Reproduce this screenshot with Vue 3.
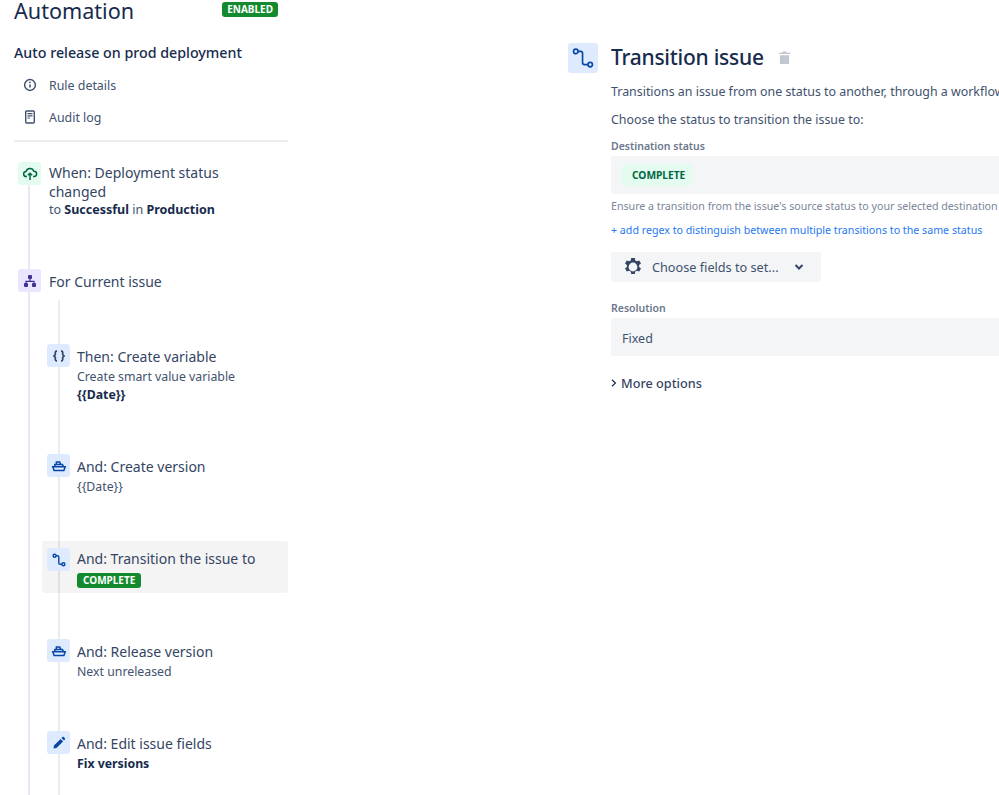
<template>
  <div class="page">
    <aside class="sidebar">
      <div class="head">
        <h1>Automation</h1>
        <span class="lozenge solid">ENABLED</span>
      </div>
      <h2 class="rule-name">Auto release on prod deployment</h2>
      <ul class="links">
        <li>
          <svg width="16" height="16" viewBox="0 0 16 16" fill="none" stroke="#42526e">
            <circle cx="8" cy="8" r="5.4" stroke-width="1.5" />
            <path d="M8 7.4v3.2" stroke-width="1.6" />
            <circle cx="8" cy="5.3" r=".9" fill="#42526e" stroke="none" />
          </svg>
          <span>Rule details</span>
        </li>
        <li>
          <svg width="16" height="16" viewBox="0 0 16 16" fill="none" stroke="#42526e">
            <rect x="3.7" y="2" width="8.6" height="12" rx="1" stroke-width="1.4" />
            <path d="M5.5 4.6h5M5.5 6.8h5M5.5 9h2.5" stroke-width="1.2" />
          </svg>
          <span>Audit log</span>
        </li>
      </ul>

      <div class="tree">
        <div class="step when">
          <span class="ico green">
            <svg width="16" height="16" viewBox="0 0 16 16" fill="none" stroke="#006644" stroke-width="1.5">
              <path d="M5 10.6H4.4a2.6 2.6 0 0 1-.3-5.2 4 4 0 0 1 7.7-.2 2.7 2.7 0 0 1 .2 5.4H11" />
              <path d="M8 14V7.4M5.8 9.3 8 7.2l2.2 2.1" />
            </svg>
          </span>
          <div class="body">
            <div class="title">When: Deployment status changed</div>
            <div class="sub big">to <b>Successful</b> in <b>Production</b></div>
          </div>
        </div>

        <div class="step for">
          <span class="ico purple">
            <svg width="16" height="16" viewBox="0 0 16 16" fill="none">
              <g fill="#403294">
                <rect x="6" y="2" width="4" height="4" rx="1" />
                <rect x="2" y="10" width="4" height="4" rx="1" />
                <rect x="10" y="10" width="4" height="4" rx="1" />
              </g>
              <path d="M8 5.800v2.600M4 10.500V8.400h8v2.100" stroke="#403294" stroke-width="1.200" />
            </svg>
          </span>
          <div class="body">
            <div class="title">For Current issue</div>
          </div>
        </div>

        <div class="nested">
          <div v-for="s in steps" :key="s.title" class="step" :class="[s.cls, { active: s.active }]">
            <span class="ico blue">
              <svg v-if="s.icon === 'braces'" width="16" height="16" viewBox="0 0 16 16" fill="none" stroke="#344563" stroke-width="1.700">
                <path d="M6 3.200h-.5c-.8 0-1.200.4-1.200 1.200v2.300L3 8l1.300 1.300v2.300c0 .8.400 1.200 1.200 1.200H6" />
                <path d="M10 3.200h.5c.8 0 1.200.4 1.200 1.200v2.300L13 8l-1.300 1.300v2.300c0 .8-.4 1.200-1.200 1.200H10" />
              </svg>
              <svg v-else-if="s.icon === 'ship'" width="16" height="16" viewBox="0 0 16 16" fill="none" stroke="#0747a6" stroke-width="1.500">
                <path d="M1.800 8.800h12.400l-1.300 3.700H3.100z" />
                <path d="M3.800 8.800V6.400h7.600l1.200 2.400M5.400 6.400V3.900h3.300l1 2.500" />
              </svg>
              <svg v-else-if="s.icon === 'transition'" width="16" height="16" viewBox="0 0 16 16" fill="none" stroke="#0747a6" stroke-width="1.400">
                <circle cx="3.600" cy="3.800" r="1.500" />
                <circle cx="12.400" cy="12.200" r="1.500" />
                <path d="M5.100 3.800h1.400c.8 0 1.300.5 1.300 1.300v5.800c0 .8.5 1.300 1.300 1.300h1.800" />
              </svg>
              <svg v-else width="16" height="16" viewBox="0 0 16 16">
                <path d="M3 10.500 9.600 3.900l2.500 2.500-6.600 6.600-3 .5zM10.500 3l.9-.9a1 1 0 0 1 1.400 0l1.100 1.100a1 1 0 0 1 0 1.400l-.9.900z" fill="#0747a6" />
              </svg>
            </span>
            <div class="body">
              <div class="title">{{ s.title }}</div>
              <div v-if="s.sub" class="sub">{{ s.sub }}</div>
              <div v-if="s.strong" class="sub"><b>{{ s.strong }}</b></div>
              <span v-if="s.active" class="lozenge solid small">COMPLETE</span>
            </div>
          </div>
        </div>
      </div>
    </aside>

    <main class="panel">
      <div class="panel-head">
        <span class="ico blue large">
          <svg width="24" height="24" viewBox="0 0 16 16" fill="none" stroke="#0747a6" stroke-width="1.100">
            <circle cx="3.200" cy="3.600" r="1.500" />
            <circle cx="12.800" cy="12.400" r="1.500" />
            <path d="M4.700 3.600h1.700c.8 0 1.300.5 1.300 1.300v6.200c0 .8.5 1.300 1.300 1.300h2.300" />
          </svg>
        </span>
        <h2>Transition issue</h2>
        <svg class="trash" width="13" height="15" viewBox="0 0 14 15">
          <path d="M5 1h4l.5 1.400H13v1.400H1V2.400h3.500zM2 5h10v8.500a1 1 0 0 1-1 1H3a1 1 0 0 1-1-1z" fill="#c1c7d0" />
        </svg>
      </div>

      <p class="desc">Transitions an issue from one status to another, through a workflow transition.</p>
      <p class="desc second">Choose the status to transition the issue to:</p>

      <label class="label">Destination status</label>
      <div class="field">
        <span class="lozenge soft">COMPLETE</span>
      </div>
      <p class="help">Ensure a transition from the issue's source status to your selected destination status exists.</p>
      <a class="regex">+ add regex to distinguish between multiple transitions to the same status</a>

      <button class="choose" type="button">
        <svg width="20" height="20" viewBox="0 0 20 20">
          <path
            fill="#344563"
            fill-rule="evenodd"
            d="M8.200 1h3.600l.5 2.500 1.500.8 2.400-.9 1.800 3.100-1.900 1.600v1.800l1.900 1.600-1.800 3.100-2.400-.9-1.500.8-.5 2.500H8.200l-.5-2.500-1.500-.8-2.400.9-1.800-3.100 1.900-1.600V8.100L2 6.500l1.800-3.100 2.400.9 1.500-.8zM10 5.600a4.400 4.400 0 1 0 0 8.800 4.400 4.400 0 0 0 0-8.800z"
          />
        </svg>
        <span>Choose fields to set...</span>
        <svg width="10" height="8" viewBox="0 0 10 8" fill="none" stroke="#344563" stroke-width="2">
          <path d="M1.500 2 5 5.500 8.500 2" />
        </svg>
      </button>

      <label class="label res">Resolution</label>
      <div class="field plain">Fixed</div>

      <div class="more">
        <svg width="6" height="8" viewBox="0 0 6 8" fill="none" stroke="#172b4d" stroke-width="1.200">
          <path d="M1 .8 4.400 4 1 7.200" />
        </svg>
        <span>More options</span>
      </div>
    </main>
  </div>
</template>

<script setup>
const steps = [
  { title: 'Then: Create variable', sub: 'Create smart value variable', strong: '{{Date}}', icon: 'braces', cls: 'var' },
  { title: 'And: Create version', sub: '{{Date}}', icon: 'ship', cls: 'ver' },
  { title: 'And: Transition the issue to', icon: 'transition', cls: 'tr', active: true },
  { title: 'And: Release version', sub: 'Next unreleased', icon: 'ship', cls: 'rel' },
  { title: 'And: Edit issue fields', strong: 'Fix versions', icon: 'pencil', cls: 'edit' },
];
</script>

<style>
html,
body {
  margin: 0;
  background: #fff;
}
</style>

<style scoped>
.page {
  display: flex;
  width: 999px;
  height: 795px;
  overflow: hidden;
  background: #fff;
  color: #172b4d;
  font-family: "Noto Sans", "Open Sans", sans-serif;
}

.sidebar {
  flex: none;
  width: 274px;
  margin-left: 14px;
}

.head {
  display: flex;
  justify-content: space-between;
  align-items: flex-start;
  height: 22px;
  padding-right: 10px;
}

h1 {
  margin: 0;
  font-size: 21.600px;
  font-weight: 400;
  line-height: 21px;
}

.lozenge {
  display: inline-block;
  border-radius: 3px;
  font-weight: 700;
}

.lozenge.solid {
  margin-top: 2px;
  padding: 0 5px;
  background: #148a2f;
  color: #fff;
  font-size: 10px;
  line-height: 15px;
}

.lozenge.small {
  display: block;
  width: fit-content;
  margin-top: 5px;
  padding: 0 6px;
}

.lozenge.soft {
  padding: 0 7px 0 10px;
  background: #e3fcef;
  color: #006644;
  font-size: 10.200px;
  line-height: 22px;
}

.rule-name {
  margin: 21px 0 0;
  font-size: 14.250px;
  font-weight: 500;
  line-height: 20px;
}

.links {
  margin: 6px 0 0;
  padding: 0 0 7px;
  border-bottom: 2px solid #ebecf0;
  list-style: none;
}

.links li {
  display: flex;
  align-items: center;
  gap: 11px;
  height: 32px;
  padding-left: 8px;
  color: #42526e;
  font-size: 12.400px;
}

.tree {
  position: relative;
  margin-top: 20px;
}

.tree::before {
  content: "";
  position: absolute;
  left: 14px;
  top: 0;
  bottom: -500px;
  width: 2px;
  background: #e8e8f3;
}

.nested {
  position: relative;
}

.nested::before {
  content: "";
  position: absolute;
  left: 44px;
  top: -44px;
  bottom: -100px;
  width: 2px;
  background: #ebecf0;
}

.step {
  position: relative;
  display: flex;
  gap: 8px;
  margin-left: 4px;
}

.nested .step {
  gap: 7px;
  margin-left: 33px;
}

.body {
  width: 205px;
}

.ico {
  position: relative;
  flex: none;
  display: flex;
  align-items: center;
  justify-content: center;
  width: 23px;
  height: 23px;
  border-radius: 3px;
}

.ico.green { background: #e3fcef; }
.ico.purple { background: #eae6ff; }
.ico.blue { background: #deebff; }

.ico.large {
  width: 30px;
  height: 30px;
}

.title {
  padding-top: 4px;
  color: #344563;
  font-size: 14px;
  line-height: 18px;
}

.when .body {
  width: 185px;
}

.when .title {
  padding-top: 1px;
  line-height: 19px;
}

.tr .title {
  padding-top: 2px;
}

.edit .title {
  padding-top: 4px;
}

.sub {
  position: relative;
  margin-top: 3px;
  color: #42526e;
  font-size: 12.300px;
  line-height: 16px;
}

.sub + .sub {
  margin-top: 2px;
}

.sub.big {
  margin-top: 0;
  font-size: 12.500px;
  line-height: 18px;
}

.sub b {
  color: #172b4d;
  font-weight: 700;
}

.title,
.lozenge {
  position: relative;
}

.when { height: 107px; }
.for { height: 75px; }
.var { height: 110px; }
.ver { height: 94px; }
.tr { height: 91px; }
.rel { height: 92px; }
.edit { height: 60px; }

.step.active::before {
  content: "";
  position: absolute;
  left: -5px;
  top: -7px;
  width: 246px;
  height: 52px;
  border-radius: 3px;
  background: rgba(0, 0, 0, 0.045);
}

.panel {
  flex: none;
  width: 560px;
  margin-left: 280px;
  padding: 43px 0 0;
  white-space: nowrap;
}

.panel-head {
  display: flex;
  align-items: center;
  height: 30px;
  margin-bottom: 10px;
}

.panel-head h2 {
  margin: 0 0 2px 13px;
  font-size: 21px;
  font-weight: 500;
  letter-spacing: -0.25px;
  line-height: 30px;
}

.trash {
  margin: 0 0 2px 14px;
}

.desc,
.help {
  margin: 0;
}

.panel > :not(.panel-head) {
  margin-left: 43px;
}

.desc {
  color: #42526e;
  font-size: 12.400px;
  line-height: 18px;
}

.desc.second {
  margin-top: 10px;
}

.label {
  display: block;
  margin-top: 10px;
  color: #6b778c;
  font-size: 10.500px;
  font-weight: 600;
  line-height: 14px;
}

.field {
  display: flex;
  align-items: center;
  height: 38px;
  margin-top: 3px;
  padding-left: 11px;
  border-radius: 3px;
  background: #f4f5f7;
}

.field.plain {
  margin-top: 3px;
  padding-top: 2px;
  box-sizing: border-box;
  color: #42526e;
  font-size: 12.500px;
}

.help {
  margin-top: 5px;
  color: #7a869a;
  font-size: 10.650px;
  line-height: 14px;
}

.regex {
  display: block;
  margin-top: 10px;
  color: #2579f0;
  font-size: 10.670px;
  line-height: 14px;
}

.choose {
  display: flex;
  align-items: center;
  width: 210px;
  height: 30px;
  margin-top: 15px;
  padding: 0 0 0 12px;
  border: 0;
  border-radius: 3px;
  background: #f4f5f7;
  color: #42526e;
  font-family: inherit;
  font-size: 12.700px;
}

.choose span {
  margin: 0 15px 0 9px;
}

.label.res {
  margin-top: 19px;
}

.more {
  display: flex;
  align-items: center;
  gap: 4px;
  margin-top: 18px;
  color: #344563;
  font-size: 12.700px;
  font-weight: 500;
}
</style>
